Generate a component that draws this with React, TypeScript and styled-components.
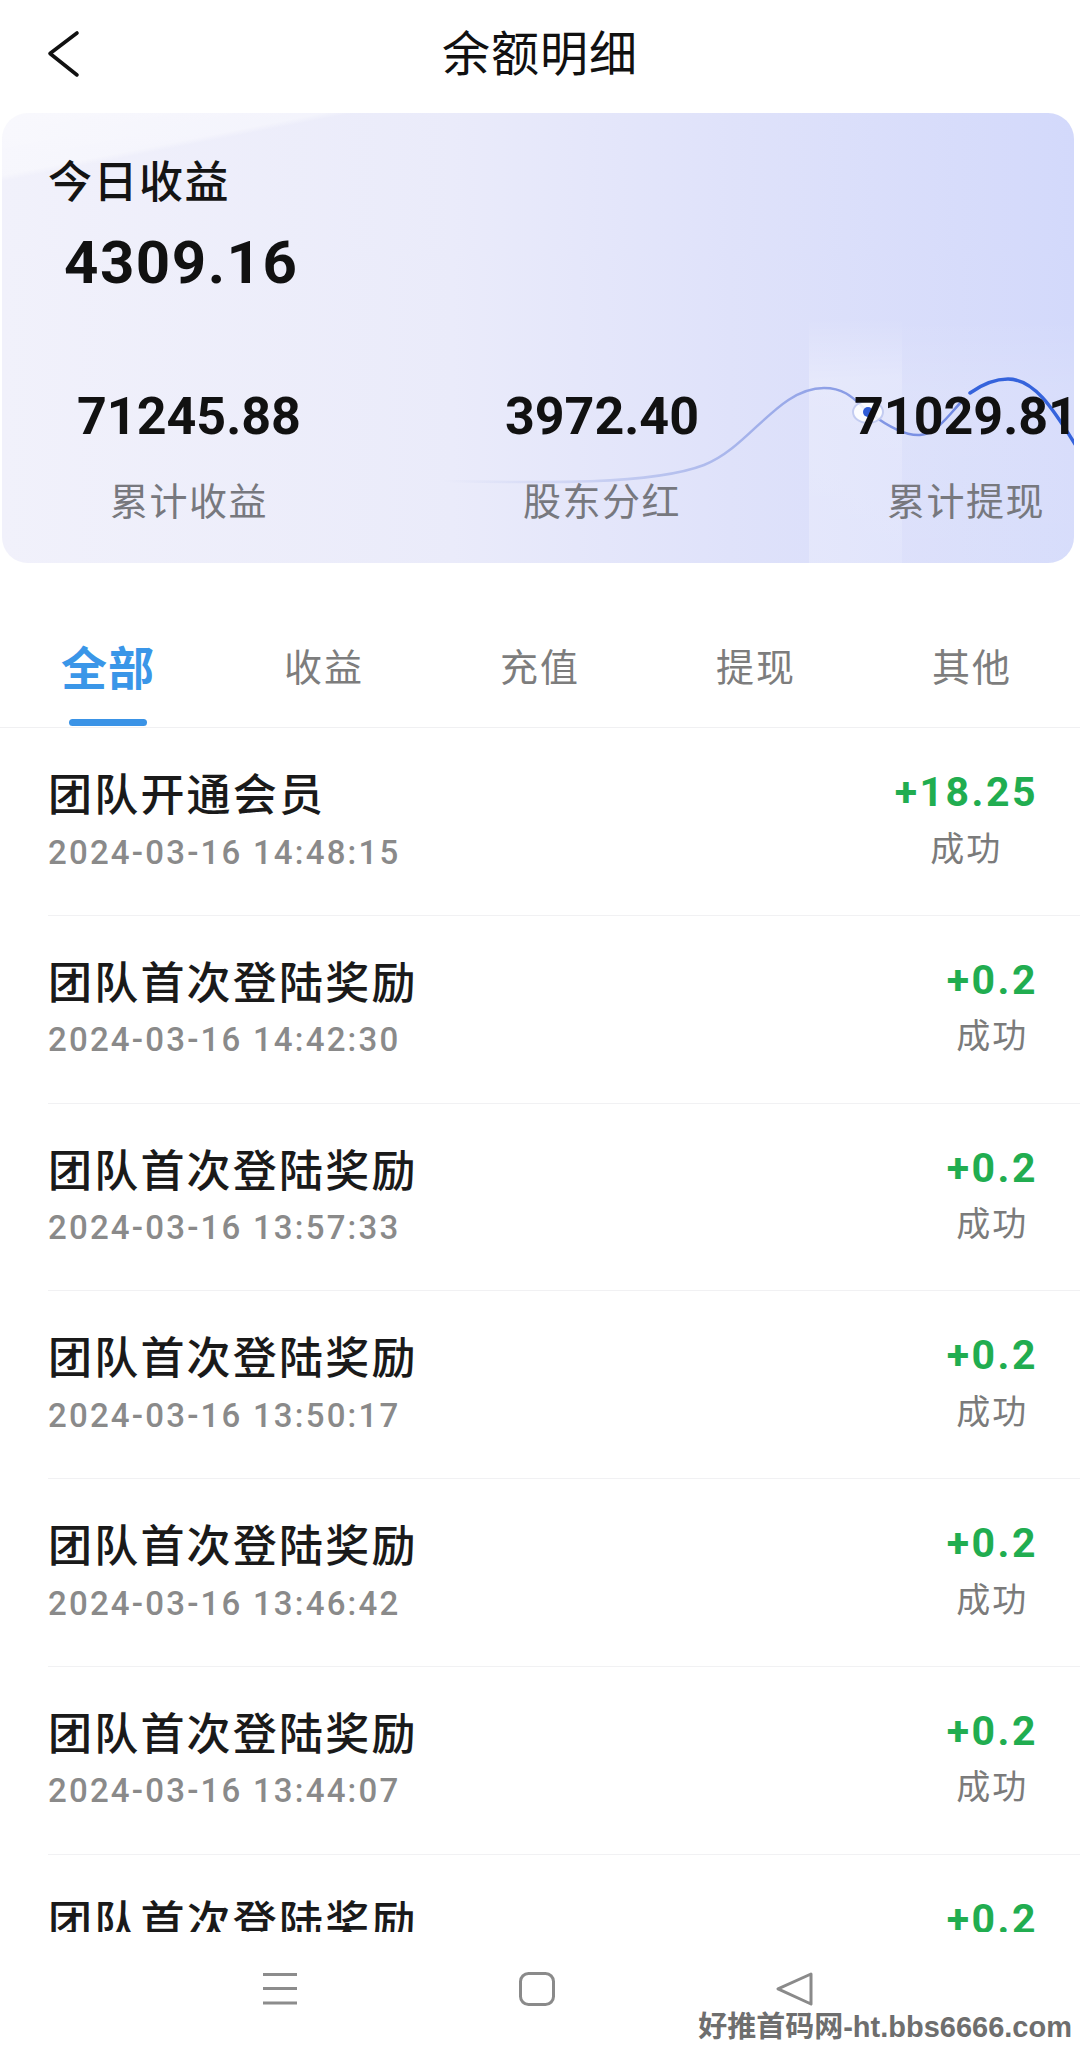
import React from "react";
import styled, { createGlobalStyle } from "styled-components";

const CJK = `"Noto Sans CJK SC", "Noto Sans", sans-serif`;
const NUM = `Roboto, "Liberation Sans", Arial, sans-serif`;

const GlobalStyle = createGlobalStyle`
  html, body { margin: 0; padding: 0; background: #ffffff; }
  body { font-family: ${CJK}; -webkit-font-smoothing: antialiased; }
  * { box-sizing: border-box; }
`;

const Screen = styled.div`
  position: relative;
  width: 1080px;
  height: 2048px;
  display: flex;
  flex-direction: column;
  overflow: hidden;
  background: #ffffff;
`;

const Header = styled.header`
  flex: none;
  height: 113px;
  display: grid;
  grid-template-columns: 140px 1fr 140px;
  align-items: start;
  padding-top: 18px;
`;

const BackButton = styled.button`
  width: 48px;
  height: 56px;
  margin: 8px 0 0 40px;
  padding: 0;
  border: 0;
  background: none;
  display: block;
`;

const Title = styled.h1`
  margin: 0;
  text-align: center;
  font-family: ${CJK};
  font-size: 48px;
  line-height: 64px;
  font-weight: 400;
  letter-spacing: 1px;
  color: #111111;
`;

const BalanceCard = styled.section`
  position: relative;
  flex: none;
  height: 450px;
  margin: 0 6px 0 2px;
  border-radius: 26px;
  overflow: hidden;
  background:
    linear-gradient(169deg, rgba(255, 255, 255, 0.55) 0%, rgba(255, 255, 255, 0.4) 9.5%, rgba(255, 255, 255, 0) 10.4%),
    linear-gradient(90deg, #f1f1fb 0%, #eaebfa 42%, #dfe2fa 68%, #d3d9fb 100%);
`;

const CardArt = styled.svg`
  position: absolute;
  inset: 0;
  width: 100%;
  height: 100%;
  pointer-events: none;
`;

const CardBody = styled.div`
  position: relative;
  z-index: 1;
`;

const TodayBlock = styled.div`
  padding: 37.5px 0 0 46px;
`;

const TodayLabel = styled.div`
  font-family: ${CJK};
  font-size: 44px;
  line-height: 56px;
  font-weight: 500;
  letter-spacing: 1.5px;
  color: #141414;
`;

const TodayAmount = styled.div`
  margin: 21.7px 0 0 16px;
  font-family: ${NUM};
  font-size: 60px;
  line-height: 70px;
  font-weight: 700;
  letter-spacing: 1.5px;
  color: #111111;
`;

const StatsRow = styled.div`
  display: grid;
  grid-template-columns: 374px 452px 276px;
  margin-top: 88.8px;
`;

const StatCell = styled.div`
  display: flex;
  flex-direction: column;
  align-items: center;
  white-space: nowrap;
`;

const StatValue = styled.div`
  font-family: ${NUM};
  font-size: 52px;
  line-height: 60px;
  font-weight: 700;
  letter-spacing: 0;
  color: #111111;
`;

const StatLabel = styled.div`
  margin-top: 27.4px;
  font-family: ${CJK};
  font-size: 38px;
  line-height: 50px;
  font-weight: 400;
  letter-spacing: 1.5px;
  color: #77787e;
`;

const TabBar = styled.nav`
  flex: none;
  display: grid;
  grid-template-columns: repeat(5, 1fr);
  padding: 71.5px 0 1px;
  border-bottom: 1.5px solid #f0f0f2;
`;

const Tab = styled.div`
  display: flex;
  flex-direction: column;
  align-items: center;
`;

const TabLabel = styled.span<{ $active?: boolean }>`
  font-family: ${CJK};
  font-size: ${(p) => (p.$active ? 46 : 38)}px;
  line-height: 60px;
  font-weight: ${(p) => (p.$active ? 700 : 400)};
  letter-spacing: ${(p) => (p.$active ? 1 : 2)}px;
  color: ${(p) => (p.$active ? "#3a96e8" : "#7d7d7d")};
`;

const TabIndicator = styled.span<{ $active?: boolean }>`
  margin-top: 24.5px;
  width: 78px;
  height: 7px;
  border-radius: 4px;
  background: ${(p) => (p.$active ? "#3a93e6" : "transparent")};
`;

const List = styled.div`
  flex: 1;
  min-height: 0;
  overflow: hidden;
`;

const Row = styled.div`
  height: 187.8px;
  margin-left: 48px;
  padding: 36px 42px 0 0;
  border-bottom: 1.5px solid #f1f1f3;
  display: flex;
  justify-content: space-between;
  align-items: flex-start;
`;

const RowMain = styled.div`
  display: flex;
  flex-direction: column;
`;

const RowTitle = styled.div`
  font-family: ${CJK};
  font-size: 44px;
  line-height: 56px;
  font-weight: 500;
  letter-spacing: 2.2px;
  color: #1a1a1a;
`;

const RowDate = styled.div`
  margin-top: 9.5px;
  font-family: ${NUM};
  font-size: 33px;
  line-height: 46px;
  font-weight: 500;
  letter-spacing: 2.2px;
  color: #8a8a8a;
`;

const RowSide = styled.div`
  display: flex;
  flex-direction: column;
  align-items: center;
`;

const Amount = styled.div`
  font-family: ${NUM};
  font-size: 41px;
  line-height: 56px;
  font-weight: 700;
  letter-spacing: 2.5px;
  color: #21ad50;
`;

const Status = styled.div`
  margin-top: 3.5px;
  font-family: ${CJK};
  font-size: 34px;
  line-height: 46px;
  font-weight: 400;
  letter-spacing: 2px;
  color: #7b7b7b;
`;

const NavBar = styled.div`
  flex: none;
  height: 116px;
  background: #ffffff;
  display: grid;
  grid-template-columns: repeat(3, 258px);
  justify-items: center;
  align-items: start;
  padding: 39px 0 0 150px;
`;

const NavIcon = styled.svg`
  width: 40px;
  height: 36px;
  display: block;
`;

const Watermark = styled.div`
  position: absolute;
  right: 8px;
  bottom: 4px;
  font-family: "Liberation Sans", ${CJK};
  font-size: 29px;
  line-height: 34px;
  font-weight: 700;
  color: #6e6e6e;
  text-shadow: 0 0 2px #ffffff, 0 0 2px #ffffff;
  white-space: nowrap;
`;

type Record = { title: string; date: string; amount: string };

const records: Record[] = [
  { title: "团队开通会员", date: "2024-03-16 14:48:15", amount: "+18.25" },
  { title: "团队首次登陆奖励", date: "2024-03-16 14:42:30", amount: "+0.2" },
  { title: "团队首次登陆奖励", date: "2024-03-16 13:57:33", amount: "+0.2" },
  { title: "团队首次登陆奖励", date: "2024-03-16 13:50:17", amount: "+0.2" },
  { title: "团队首次登陆奖励", date: "2024-03-16 13:46:42", amount: "+0.2" },
  { title: "团队首次登陆奖励", date: "2024-03-16 13:44:07", amount: "+0.2" },
  { title: "团队首次登陆奖励", date: "2024-03-16 13:40:52", amount: "+0.2" },
];

const tabs = ["全部", "收益", "充值", "提现", "其他"];

const stats = [
  { value: "71245.88", label: "累计收益" },
  { value: "3972.40", label: "股东分红" },
  { value: "71029.81", label: "累计提现" },
];

function CardDecoration() {
  return (
    <CardArt viewBox="0 0 1072 450" preserveAspectRatio="none" aria-hidden="true">
      <defs>
        <linearGradient id="waveFade" x1="440" y1="0" x2="960" y2="0" gradientUnits="userSpaceOnUse">
          <stop offset="0" stopColor="#c9d0f2" stopOpacity="0" />
          <stop offset="0.35" stopColor="#b9c3ee" stopOpacity="0.8" />
          <stop offset="0.75" stopColor="#8d9fe6" />
          <stop offset="1" stopColor="#6f88e2" />
        </linearGradient>
        <linearGradient id="panelA" x1="0" y1="0" x2="0" y2="1">
          <stop offset="0" stopColor="#ffffff" stopOpacity="0" />
          <stop offset="0.25" stopColor="#ffffff" stopOpacity="0.28" />
          <stop offset="1" stopColor="#ffffff" stopOpacity="0.22" />
        </linearGradient>
        <linearGradient id="panelB" x1="0" y1="0" x2="0" y2="1">
          <stop offset="0" stopColor="#ffffff" stopOpacity="0" />
          <stop offset="0.3" stopColor="#ffffff" stopOpacity="0.12" />
          <stop offset="1" stopColor="#ffffff" stopOpacity="0.1" />
        </linearGradient>
      </defs>
      <rect x="807" y="205" width="93" height="245" fill="url(#panelA)" />
      <rect x="900" y="205" width="172" height="245" fill="url(#panelB)" />
      <path
        d="M 440 368 C 540 370 650 372 702 352 C 748 334 776 275 822 275 C 848 275 856 292 868 300 C 884 312 902 323 918 322 C 936 320 948 300 962 286"
        fill="none"
        stroke="url(#waveFade)"
        strokeWidth="2.5"
      />
      <path
        d="M 968 280 C 982 270 994 266 1006 266 C 1036 266 1056 305 1080 342"
        fill="none"
        stroke="#3563dc"
        strokeWidth="3.5"
        strokeLinecap="round"
      />
      <ellipse cx="866" cy="299" rx="15" ry="11" fill="#ffffff" fillOpacity="0.85" stroke="#c3ccf1" strokeWidth="2" />
      <circle cx="866" cy="299" r="5" fill="#2f5cd6" />
    </CardArt>
  );
}

export default function App() {
  return (
    <>
      <GlobalStyle />
      <Screen>
        <Header>
          <BackButton aria-label="返回">
            <svg width="48" height="56" viewBox="0 0 48 56" fill="none">
              <path d="M37 7 L10 27.5 L37 49" stroke="#111111" strokeWidth="3.6" strokeLinecap="round" strokeLinejoin="round" />
            </svg>
          </BackButton>
          <Title>余额明细</Title>
          <span />
        </Header>

        <BalanceCard>
          <CardDecoration />
          <CardBody>
            <TodayBlock>
              <TodayLabel>今日收益</TodayLabel>
              <TodayAmount>4309.16</TodayAmount>
            </TodayBlock>
            <StatsRow>
              {stats.map((s) => (
                <StatCell key={s.label}>
                  <StatValue>{s.value}</StatValue>
                  <StatLabel>{s.label}</StatLabel>
                </StatCell>
              ))}
            </StatsRow>
          </CardBody>
        </BalanceCard>

        <TabBar>
          {tabs.map((t, i) => (
            <Tab key={t}>
              <TabLabel $active={i === 0}>{t}</TabLabel>
              <TabIndicator $active={i === 0} />
            </Tab>
          ))}
        </TabBar>

        <List>
          {records.map((r, i) => (
            <Row key={i}>
              <RowMain>
                <RowTitle>{r.title}</RowTitle>
                <RowDate>{r.date}</RowDate>
              </RowMain>
              <RowSide>
                <Amount>{r.amount}</Amount>
                <Status>成功</Status>
              </RowSide>
            </Row>
          ))}
        </List>

        <NavBar>
          <NavIcon viewBox="0 0 40 36" fill="none">
            <path d="M4 3.5 H38 M4 17.5 H38 M4 32 H38" stroke="#8c8c8c" strokeWidth="3" />
          </NavIcon>
          <NavIcon viewBox="0 0 40 36" fill="none">
            <rect x="3.5" y="2.5" width="33" height="31" rx="8" stroke="#8a8a8a" strokeWidth="3" />
          </NavIcon>
          <NavIcon viewBox="0 0 40 36" fill="none">
            <path d="M36 3 L3 17.8 L36 33 Z" stroke="#8a8a8a" strokeWidth="3" strokeLinejoin="round" />
          </NavIcon>
        </NavBar>

        <Watermark>好推首码网-ht.bbs6666.com</Watermark>
      </Screen>
    </>
  );
}
